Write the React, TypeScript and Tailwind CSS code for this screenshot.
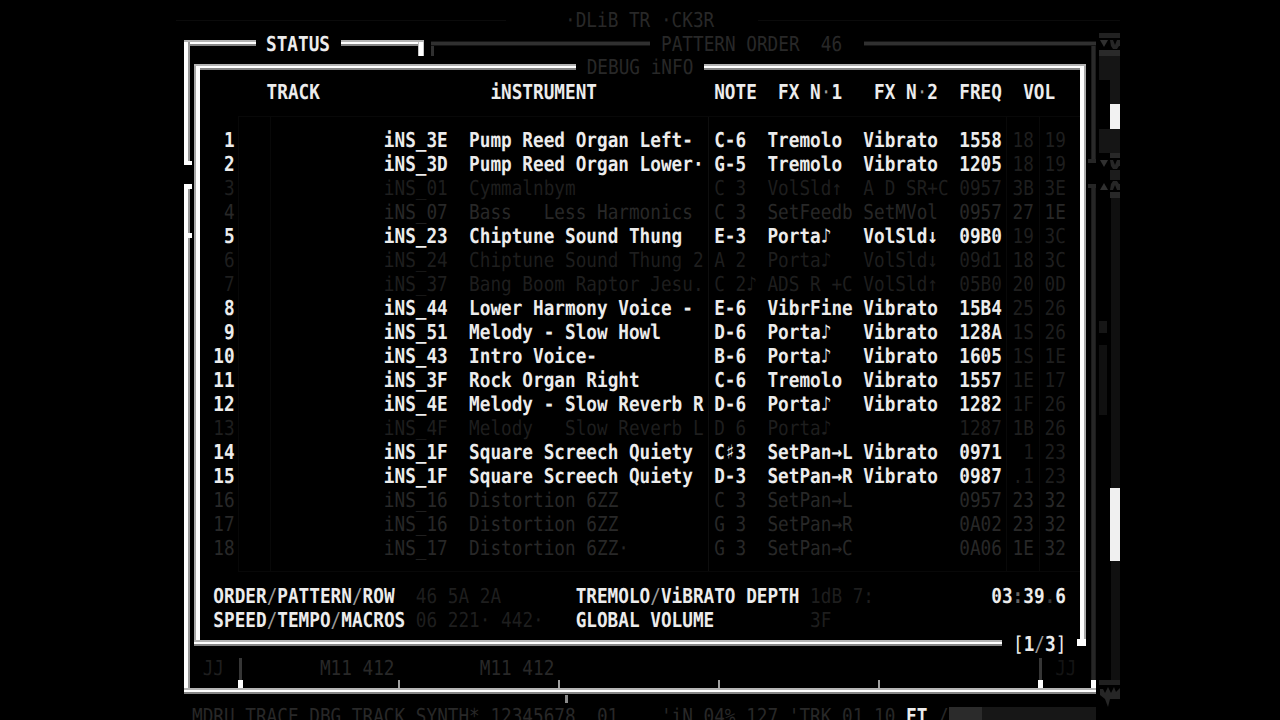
import React from 'react'
import clsx from 'clsx'

type Tone = 'on' | 'dim' | 'faint'

const TONES: Record<Tone, string> = {
  on: "text-[#ececec] font-bold",
  dim: "text-[#282828]",
  faint: "text-[#1e1e1e]",
};

interface Track {
  no: string
  ins: string
  name: string
  note: string
  fx1: string
  fx2: string
  freq: string
  vol: string
  tone: Tone
}

const TRACKS: Track[] = [
  { no: " 1", ins: "iNS_3E", name: "Pump Reed Organ Left-",  note: "C-6", fx1: "Tremolo",  fx2: "Vibrato",  freq: "1558", vol: "18 19", tone: 'on' },
  { no: " 2", ins: "iNS_3D", name: "Pump Reed Organ Lower·", note: "G-5", fx1: "Tremolo",  fx2: "Vibrato",  freq: "1205", vol: "18 19", tone: 'on' },
  { no: " 3", ins: "iNS_01", name: "Cymmalnbym",             note: "C 3", fx1: "VolSld↑",  fx2: "A D SR+C", freq: "0957", vol: "3B 3E", tone: 'faint' },
  { no: " 4", ins: "iNS_07", name: "Bass   Less Harmonics",  note: "C 3", fx1: "SetFeedb", fx2: "SetMVol",  freq: "0957", vol: "27 1E", tone: 'dim' },
  { no: " 5", ins: "iNS_23", name: "Chiptune Sound Thung",   note: "E-3", fx1: "Porta♪",   fx2: "VolSld↓",  freq: "09B0", vol: "19 3C", tone: 'on' },
  { no: " 6", ins: "iNS_24", name: "Chiptune Sound Thung 2", note: "A 2", fx1: "Porta♪",   fx2: "VolSld↓",  freq: "09d1", vol: "18 3C", tone: 'faint' },
  { no: " 7", ins: "iNS_37", name: "Bang Boom Raptor Jesu.", note: "C 2♪", fx1: "ADS R +C", fx2: "VolSld↑",  freq: "05B0", vol: "20 0D", tone: 'faint' },
  { no: " 8", ins: "iNS_44", name: "Lower Harmony Voice -",  note: "E-6", fx1: "VibrFine", fx2: "Vibrato",  freq: "15B4", vol: "25 26", tone: 'on' },
  { no: " 9", ins: "iNS_51", name: "Melody - Slow Howl",     note: "D-6", fx1: "Porta♪",   fx2: "Vibrato",  freq: "128A", vol: "1S 26", tone: 'on' },
  { no: "10", ins: "iNS_43", name: "Intro Voice-",           note: "B-6", fx1: "Porta♪",   fx2: "Vibrato",  freq: "1605", vol: "1S 1E", tone: 'on' },
  { no: "11", ins: "iNS_3F", name: "Rock Organ Right",       note: "C-6", fx1: "Tremolo",  fx2: "Vibrato",  freq: "1557", vol: "1E 17", tone: 'on' },
  { no: "12", ins: "iNS_4E", name: "Melody - Slow Reverb R", note: "D-6", fx1: "Porta♪",   fx2: "Vibrato",  freq: "1282", vol: "1F 26", tone: 'on' },
  { no: "13", ins: "iNS_4F", name: "Melody   Slow Reverb L", note: "D 6", fx1: "Porta♪",   fx2: "",         freq: "1287", vol: "1B 26", tone: 'faint' },
  { no: "14", ins: "iNS_1F", name: "Square Screech Quiety",  note: "C♯3", fx1: "SetPan→L", fx2: "Vibrato",  freq: "0971", vol: " 1 23", tone: 'on' },
  { no: "15", ins: "iNS_1F", name: "Square Screech Quiety",  note: "D-3", fx1: "SetPan→R", fx2: "Vibrato",  freq: "0987", vol: ".1 23", tone: 'on' },
  { no: "16", ins: "iNS_16", name: "Distortion 6ZZ",         note: "C 3", fx1: "SetPan→L", fx2: "",         freq: "0957", vol: "23 32", tone: 'dim' },
  { no: "17", ins: "iNS_16", name: "Distortion 6ZZ",         note: "G 3", fx1: "SetPan→R", fx2: "",         freq: "0A02", vol: "23 32", tone: 'dim' },
  { no: "18", ins: "iNS_17", name: "Distortion 6ZZ·",        note: "G 3", fx1: "SetPan→C", fx2: "",         freq: "0A06", vol: "1E 32", tone: 'dim' },
];

const LINE_H = "h-[6px] shrink-0 bg-[linear-gradient(#b4b4b4_0_2px,#fff_2px_4px,#868686_4px_6px)]";
const DIM_H = "h-[5px] shrink-0 bg-[linear-gradient(#151515_0_1px,#303030_1px_4px,#151515_4px_5px)]";

const Txt = ({ tone = 'on', className, children }: { tone?: Tone; className?: string; children: React.ReactNode }) => (
  <span className={clsx("block h-6 origin-center scale-y-[1.16] whitespace-pre pt-px leading-6", TONES[tone], className)}>
    {children}
  </span>
)

// Slashes and middle dots are drawn weaker than the letters
const Soft = ({ children }: { children: React.ReactNode }) => (
  <span className="font-normal text-[#9a9a9a]">{children}</span>
)

// One text line: 81 character cells, starting at the dialog's sixth column
const Line = ({ className, children }: { className?: string; children?: React.ReactNode }) => (
  <div className={clsx("grid h-6 shrink-0 grid-cols-[repeat(81,10.6667px)]", className)}>{children}</div>
)

const TrackRow = ({ t }: { t: Track }) => (
  <Line>
    <Txt tone={t.tone} className="col-start-1">{t.no}</Txt>
    <Txt tone={t.tone} className="col-start-17">{t.ins}</Txt>
    <Txt tone={t.tone} className="col-start-25">{t.name}</Txt>
    <Txt tone={t.tone} className="col-start-48">{t.note}</Txt>
    <Txt tone={t.tone} className="col-start-53">{t.fx1}</Txt>
    <Txt tone={t.tone} className="col-start-62">{t.fx2}</Txt>
    <Txt tone={t.tone} className="col-start-71">{t.freq}</Txt>
    <Txt tone={t.tone === 'dim' ? 'dim' : 'faint'} className="col-start-76">{t.vol}</Txt>
  </Line>
)

const DebugInfo = () => (
  <section className="absolute left-[194px] top-[64px] flex h-[582px] w-[892px] flex-col bg-black">
    <div className="flex h-[6px] shrink-0 items-center">
      <div className={clsx(LINE_H, "w-[382px]")} />
      <div className="flex h-6 w-[128px] justify-center">
        <Txt tone="dim">DEBUG iNFO</Txt>
      </div>
      <div className={clsx(LINE_H, "w-[382px]")} />
    </div>

    <div className="flex h-[570px] shrink-0">
      <div className="-mt-1 w-[6px] shrink-0 bg-[linear-gradient(90deg,#a8a8a8_0_2px,#fff_2px_6px)]" />
      <div className="relative h-full w-[880px] overflow-hidden pl-[13.33px] pt-[10px]">
        {/* table rules */}
        <div className="absolute left-[38px] top-[46px] flex h-[456px] w-[842px] border-y border-[#080808]">
          <div className="w-[33px] border-x border-[#080808]" />
          <div className="w-[438px] border-r border-[#0e0e0e]" />
          <div className="w-[298px] border-r border-[#090909]" />
          <div className="w-[33px] border-r border-[#090909]" />
        </div>

        <div className="relative">
          <Line className="mb-6">
            <Txt className="col-start-6">TRACK</Txt>
            <Txt className="col-start-27">iNSTRUMENT</Txt>
            <Txt className="col-start-48">NOTE</Txt>
            <Txt className="col-start-54">FX N<Soft>·</Soft>1</Txt>
            <Txt className="col-start-63">FX N<Soft>·</Soft>2</Txt>
            <Txt className="col-start-71">FREQ</Txt>
            <Txt className="col-start-77">VOL</Txt>
          </Line>

          {TRACKS.map((t) => (
            <TrackRow key={t.no} t={t} />
          ))}

          <Line className="mt-6">
            <Txt className="col-start-1">ORDER<Soft>/</Soft>PATTERN<Soft>/</Soft>ROW</Txt>
            <Txt tone="faint" className="col-start-20">46 5A 2A</Txt>
            <Txt className="col-start-35">TREMOLO<Soft>/</Soft>ViBRATO DEPTH</Txt>
            <Txt tone="faint" className="col-start-57">1dB 7:</Txt>
            <Txt className="col-start-74">03<span className="text-[#666]">:</span>39<span className="text-[#333]">.</span>6</Txt>
          </Line>
          <Line>
            <Txt className="col-start-1">SPEED<Soft>/</Soft>TEMPO<Soft>/</Soft>MACROS</Txt>
            <Txt tone="faint" className="col-start-20">06 221· 442·</Txt>
            <Txt className="col-start-35">GLOBAL VOLUME</Txt>
            <Txt tone="faint" className="col-start-57">3F</Txt>
          </Line>
        </div>
      </div>
      <div className="-mt-1 w-[6px] shrink-0 bg-[linear-gradient(90deg,#fff_0_4px,#aaa_4px_6px)]" />
    </div>

    <div className="flex h-[6px] shrink-0 items-center">
      <div className={clsx(LINE_H, "w-[808px]")} />
      <div className="flex h-[26px] w-[75px] items-end pl-[11px]">
        <Txt className="font-normal">[<span className="font-bold">1</span><Soft>/</Soft><span className="font-bold">3</span>]</Txt>
      </div>
      <div className="h-[7px] w-[9px] -translate-y-px bg-white" />
    </div>
  </section>
)

// Bracket-like edge on the left of the status window
const Edge = ({ className }: { className: string }) => (
  <div className={clsx("shrink-0 bg-[linear-gradient(90deg,#fff_0_4px,#9a9a9a_4px_6px)]", className)} />
)

const StatusFrame = () => (
  <section className="absolute left-[184px] top-[40px] flex h-[654px] w-[912px] flex-col">
    <div className="flex h-[6px] shrink-0 items-center">
      <div className={clsx(LINE_H, "w-[72px]")} />
      <div className="flex h-[26px] w-[85px] items-end pl-[10px]"><Txt>STATUS</Txt></div>
      <div className={clsx(LINE_H, "w-[83px]")} />
      <div className={clsx(DIM_H, "ml-[7px] w-[219px]")} />
      <div className="flex h-[26px] w-[214px] items-end pl-[11px]">
        <Txt tone="dim">PATTERN ORDER  46</Txt>
      </div>
      <div className={clsx(DIM_H, "w-[232px]")} />
    </div>

    <div className="flex h-[642px] shrink-0 justify-between">
      <div className="flex w-[9px] flex-col">
        <Edge className="-mt-1 h-[119px] w-[6px]" />
        <div className="h-[4px] w-[8px] bg-white" />
        <div className="mt-[19px] h-[5px] w-[8px] bg-white" />
        <Edge className="h-[44px] w-[6px]" />
        <div className="h-[5px] w-[8px] bg-white" />
        <Edge className="h-[450px] w-[6px]" />
      </div>
      {/* tab ends hanging from the top rules */}
      <div className="flex flex-1 pl-[225px]">
        <div className="-mt-1 h-[14px] w-[6px] bg-[linear-gradient(90deg,#c4c4c4_0_1px,#fff_1px_5px,#c4c4c4_5px_6px)]" />
        <div className="ml-[7px] h-[10px] w-[3px] bg-[#303030]" />
      </div>
      <div className="flex w-[8px] flex-col items-end">
        <div className="h-[113px] w-[5px] border-x border-[#1c1c1c] bg-[#2a2a2a]" />
        <div className="h-[4px] w-[8px] bg-[#262626]" />
        <div className="mt-[21px] h-[4px] w-[8px] bg-[#262626]" />
        <div className="h-[492px] w-[5px] border-x border-[#1c1c1c] bg-[#262626]" />
        <div className="h-[8px] w-[5px] bg-white" />
      </div>
    </div>

    <div className={clsx(LINE_H, "w-full")} />
  </section>
)

// Line of pattern markers and the ruler ticks that stand on the frame
const Markers = () => (
  <div className="absolute left-[202.67px] top-[656px] h-8 w-[890px]">
    <Line>
      <Txt tone="faint" className="col-start-1">JJ</Txt>
      <Txt tone="dim" className="col-start-12">M11 412</Txt>
      <Txt tone="dim" className="col-start-27">M11 412</Txt>
      <Txt tone="faint" className="col-start-[81] text-[#141414]">JJ</Txt>
    </Line>
    <div className="absolute left-[35px] top-[2px] flex h-[30px] w-[808px] items-end">
      <div className="flex h-full w-[5px] flex-col items-center">
        <div className="h-[22px] w-[3px] bg-[#363636]" />
        <div className="h-[8px] w-[5px] bg-white" />
      </div>
      <div className="ml-[155px] h-[8px] w-[2px] bg-[#a0a0a0]" />
      <div className="ml-[158px] h-[8px] w-[2px] bg-[#a0a0a0]" />
      <div className="ml-[158px] h-[8px] w-[2px] bg-[#a0a0a0]" />
      <div className="ml-[158px] h-[8px] w-[2px] bg-[#a0a0a0]" />
      <div className="ml-[158px] flex h-full w-[5px] flex-col items-center">
        <div className="h-[22px] w-[3px] bg-[#363636]" />
        <div className="h-[8px] w-[5px] bg-white" />
      </div>
    </div>
    <div className="absolute left-[362px] top-[39px] h-[8px] w-[3px] bg-[#8a8a8a]" />
  </div>
)

const Arrows = ({ up }: { up?: boolean }) => (
  <svg viewBox="0 0 20 12" className={clsx("h-3 w-5 shrink-0 fill-[#303030]", up && "-scale-y-100")}>
    <path d="M0 2h8L4 9z" />
    <path d="M10 2h3l2 5 2-5h3v6h-1l-2 3h-4l-2-3z" className="fill-[#262626]" />
  </svg>
)

const ScrollBars = () => (
  <aside className="absolute left-[1099px] top-[33px] flex h-[687px] w-[21px] flex-col items-end">
    <div className="h-[5px] w-full bg-[#212121]" />
    <Arrows />
    <div className="h-[6px] w-full bg-[#2a2a2a]" />
    <div className="h-[24px] w-full bg-[#151515]" />
    <div className="h-[24px] w-[10px] bg-[#151515]" />
    <div className="h-[25px] w-[10px] bg-[#f2f2f2]" />
    <div className="h-[24px] w-full bg-[#151515]" />
    <div className="h-[5px] w-[10px] bg-[#282828]" />
    <Arrows />
    <div className="h-[10px] w-[10px] bg-[#1c1c1c]" />
    <Arrows up />
    <div className="h-[6px] w-[10px] bg-[#282828]" />
    <div className="flex h-[290px] w-full justify-between">
      <div className="flex w-[8px] flex-col pt-[123px]">
        <div className="h-[12px] bg-[#161616]" />
        <div className="mt-[12px] h-[70px] bg-[#101010]" />
      </div>
      <div className="w-[9px] bg-[#101010]" />
    </div>
    <div className="h-[73px] w-[10px] bg-[#f0f0f0]" />
    <div className="h-[119px] w-[9px] bg-[#101010]" />
    <div className="h-[5px] w-full shrink-0 bg-[#202020]" />
    <svg viewBox="0 0 20 28" className="h-7 w-5 shrink-0 fill-[#262626]">
      <path d="M0 4h3l2 4 3-6 3 6 3-6 2 5 4-4v11H10l-2 8-3-8-5-4z" />
    </svg>
  </aside>
)

const StatusLine = () => (
  <footer className="absolute left-[192px] top-[704px] flex h-6 w-[928px]">
    <Line className="w-[748px]">
      <Txt tone="dim" className="col-start-1">MDRU TRACE DBG TRACK SYNTH*</Txt>
      <Txt tone="dim" className="col-start-29">12345678</Txt>
      <Txt tone="dim" className="col-start-39">01</Txt>
      <Txt tone="dim" className="col-start-45">'iN 04% 127 '</Txt>
      <Txt tone="dim" className="col-start-58">TRK 01 10</Txt>
      <Txt className="col-start-68">FT</Txt>
      <Txt tone="dim" className="col-start-71">/</Txt>
    </Line>
    <div className="ml-[9px] mt-[3px] flex h-5">
      <div className="w-[33px] bg-[#2b2b2b]" />
      <div className="w-[114px] bg-[#171717]" />
    </div>
  </footer>
)

const App = () => {
  return (
    <div className="relative h-[720px] w-[1280px] overflow-hidden bg-black font-['DejaVu_Sans_Mono',monospace] text-[17.718px] [text-rendering:geometricPrecision]">
      <header className="absolute left-[176px] top-[8px] flex h-6 w-[944px] items-center">
        <div className="h-px w-[330px] bg-[#0b0b0b]" />
        <div className="flex w-[252px] pl-[59px]">
          <Txt tone="dim">·DLiB TR ·CK3R</Txt>
        </div>
        <div className="h-px flex-1 bg-[#0b0b0b]" />
      </header>

      <StatusFrame />
      <Markers />
      <ScrollBars />
      <StatusLine />
      <DebugInfo />
    </div>
  )
}

export default App
